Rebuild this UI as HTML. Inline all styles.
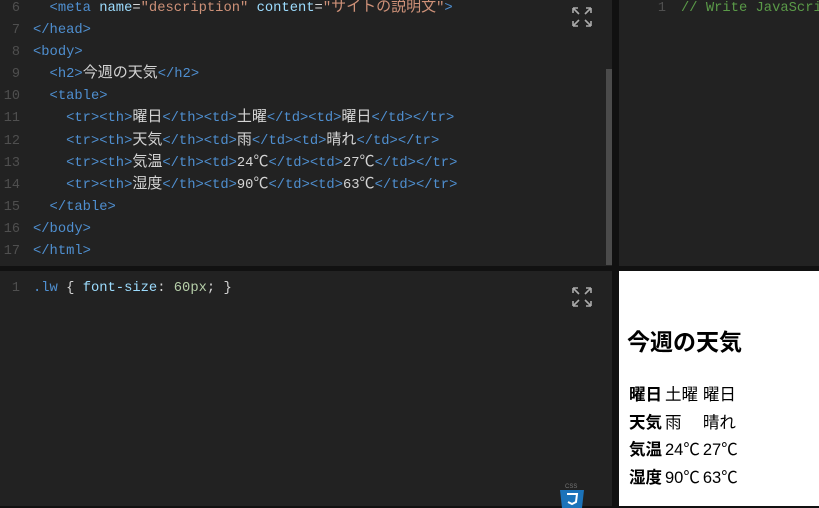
<!DOCTYPE html>
<html><head><meta charset="utf-8"><style>
*{margin:0;padding:0;box-sizing:border-box}
body{width:819px;height:506px;overflow:hidden;background:#111;position:relative;font-family:"Liberation Mono","Noto Sans CJK JP",monospace}
.ed{position:absolute;background:#222}
.code{position:absolute;font-size:13.8px;line-height:22.1px;white-space:pre;color:#d4d4d4}
.ln{position:absolute;width:20px;text-align:right;color:#4f4f4f;font-size:13.5px;line-height:22.1px}
.t{color:#4f8fd0}.a{color:#9cdcfe}.s{color:#ce9178}.c{color:#5a9a48}.n{color:#b5cea8}
.j{font-size:15px;line-height:10px}
.ex{position:absolute;width:22px;height:22px}
.pv{position:absolute;left:619px;top:271px;width:200px;height:235px;background:#fff;font-family:"Liberation Sans","Noto Sans CJK JP",sans-serif;color:#000}
</style></head><body>
<div class="ed" style="left:0;top:0;width:612px;height:266px"></div>
<div class="ed" style="left:619px;top:0;width:200px;height:266px"></div>
<div class="ed" style="left:0;top:271px;width:612px;height:235px"></div>
<div style="position:absolute;left:606px;top:69px;width:6px;height:196px;background:#4b4b4b"></div>

<div class="ln" style="left:0;top:-2px">6<br>7<br>8<br>9<br>10<br>11<br>12<br>13<br>14<br>15<br>16<br>17</div>
<div class="code" style="left:33px;top:-2px"><span class="t">  &lt;meta</span> <span class="a">name</span>=<span class="s">"description"</span> <span class="a">content</span>=<span class="s">"<span class="j">サイトの説明文</span>"</span><span class="t">&gt;</span>
<span class="t">&lt;/head&gt;</span>
<span class="t">&lt;body&gt;</span>
<span class="t">  &lt;h2&gt;</span><span class="j">今週の天気</span><span class="t">&lt;/h2&gt;</span>
<span class="t">  &lt;table&gt;</span>
<span class="t">    &lt;tr&gt;&lt;th&gt;</span><span class="j">曜日</span><span class="t">&lt;/th&gt;&lt;td&gt;</span><span class="j">土曜</span><span class="t">&lt;/td&gt;&lt;td&gt;</span><span class="j">曜日</span><span class="t">&lt;/td&gt;&lt;/tr&gt;</span>
<span class="t">    &lt;tr&gt;&lt;th&gt;</span><span class="j">天気</span><span class="t">&lt;/th&gt;&lt;td&gt;</span><span class="j">雨</span><span class="t">&lt;/td&gt;&lt;td&gt;</span><span class="j">晴れ</span><span class="t">&lt;/td&gt;&lt;/tr&gt;</span>
<span class="t">    &lt;tr&gt;&lt;th&gt;</span><span class="j">気温</span><span class="t">&lt;/th&gt;&lt;td&gt;</span>24<span class="j">℃</span><span class="t">&lt;/td&gt;&lt;td&gt;</span>27<span class="j">℃</span><span class="t">&lt;/td&gt;&lt;/tr&gt;</span>
<span class="t">    &lt;tr&gt;&lt;th&gt;</span><span class="j">湿度</span><span class="t">&lt;/th&gt;&lt;td&gt;</span>90<span class="j">℃</span><span class="t">&lt;/td&gt;&lt;td&gt;</span>63<span class="j">℃</span><span class="t">&lt;/td&gt;&lt;/tr&gt;</span>
<span class="t">  &lt;/table&gt;</span>
<span class="t">&lt;/body&gt;</span>
<span class="t">&lt;/html&gt;</span></div>

<div class="ln" style="left:646px;top:-2px">1</div>
<div class="code c" style="left:681px;top:-2px">// Write JavaScript</div>

<div class="ln" style="left:0;top:278px">1</div>
<div class="code" style="left:33px;top:278px"><span class="t">.lw</span> { <span class="a">font-size</span>: <span class="n">60px</span>; }</div>

<svg class="ex" style="left:571px;top:6px" viewBox="0 0 22 22" fill="none" stroke="#aaa" stroke-width="1.6"><path d="M2 2l6 6M2 2h5M2 2v5M20 2l-6 6M20 2h-5M20 2v5M2 20l6-6M2 20h5M2 20v-5M20 20l-6-6M20 20h-5M20 20v-5"/></svg>
<svg class="ex" style="left:571px;top:286px" viewBox="0 0 22 22" fill="none" stroke="#aaa" stroke-width="1.6"><path d="M2 2l6 6M2 2h5M2 2v5M20 2l-6 6M20 2h-5M20 2v5M2 20l6-6M2 20h5M2 20v-5M20 20l-6-6M20 20h-5M20 20v-5"/></svg>

<div style="position:absolute;left:565px;top:484px;font:6px 'Liberation Sans',sans-serif;color:#777">CSS</div>
<svg style="position:absolute;left:560px;top:490px" width="24" height="18" viewBox="0 0 24 18"><path d="M0 0h24l-2 18H2z" fill="#1b73ba"/><path d="M7 4h10l-1 8-4 2-4-2" fill="none" stroke="#fff" stroke-width="2"/></svg>

<div class="pv">
<div style="position:absolute;left:8px;top:52px;font-size:23px;font-weight:bold">今週の天気</div>
<table style="position:absolute;left:7px;top:110px;border-collapse:separate;border-spacing:3px 2px;font-size:16.5px;line-height:25.7px">
<tr><th style="text-align:left">曜日</th><td>土曜</td><td>曜日</td></tr>
<tr><th style="text-align:left">天気</th><td>雨</td><td>晴れ</td></tr>
<tr><th style="text-align:left">気温</th><td>24℃</td><td>27℃</td></tr>
<tr><th style="text-align:left">湿度</th><td>90℃</td><td>63℃</td></tr>
</table>
</div>
</body></html>
